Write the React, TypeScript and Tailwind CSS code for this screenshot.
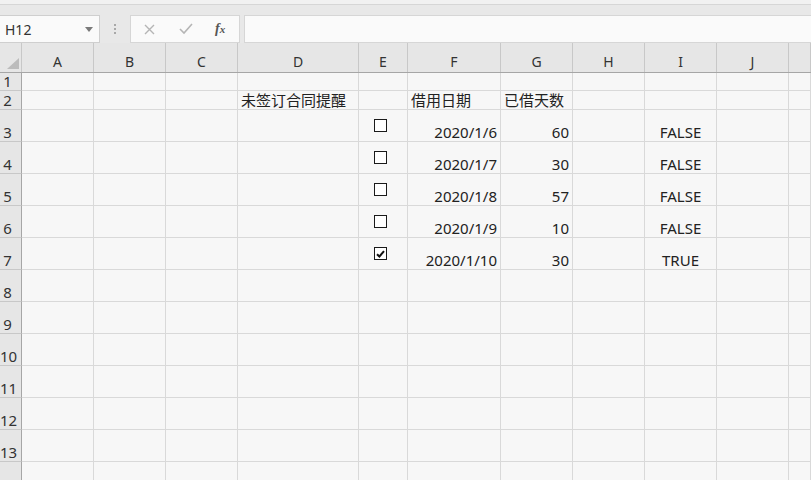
import React from 'react'

const cols = ['A', 'B', 'C', 'D', 'E', 'F', 'G', 'H', 'I', 'J', '']

type Row = { n: number; h: string; d?: string; e?: 'off' | 'on'; f?: string; g?: string; i?: string; header?: boolean; hideNum?: boolean }

const rows: Row[] = [
  { n: 1, h: 'h-[18px]' },
  { n: 2, h: 'h-[19px]', d: '未签订合同提醒', f: '借用日期', g: '已借天数', header: true },
  { n: 3, h: 'h-[32px]', e: 'off', f: '2020/1/6', g: '60', i: 'FALSE' },
  { n: 4, h: 'h-[32px]', e: 'off', f: '2020/1/7', g: '30', i: 'FALSE' },
  { n: 5, h: 'h-[32px]', e: 'off', f: '2020/1/8', g: '57', i: 'FALSE' },
  { n: 6, h: 'h-[32px]', e: 'off', f: '2020/1/9', g: '10', i: 'FALSE' },
  { n: 7, h: 'h-[32px]', e: 'on', f: '2020/1/10', g: '30', i: 'TRUE' },
  { n: 8, h: 'h-[32px]' },
  { n: 9, h: 'h-[32px]' },
  { n: 10, h: 'h-[32px]' },
  { n: 11, h: 'h-[32px]' },
  { n: 12, h: 'h-[32px]' },
  { n: 13, h: 'h-[32px]' },
  // row 14 only shows its top edge, the number sits below the window
  { n: 14, h: 'h-[32px]', hideNum: true },
]

const grid = 'grid grid-cols-[22px_72px_72px_72px_121px_49px_93px_72px_72px_72px_72px_1fr]'

function Checkbox({ checked }: { checked: boolean }) {
  return (
    <div className="w-[13px] h-[13px] border-[1.5px] border-[#1a1a1a] bg-white flex items-center justify-center">
      {checked && (
        <svg width="9" height="8" viewBox="0 0 9 8">
          <path d="M1 4.2 L3.4 6.5 L8 1.2" fill="none" stroke="#111" strokeWidth="2" />
        </svg>
      )}
    </div>
  )
}

function Cell({ children, align = 'left', className = '' }: { children?: React.ReactNode; align?: 'left' | 'right' | 'center'; className?: string }) {
  const justify = align === 'right' ? 'justify-end pr-[3px]' : align === 'center' ? 'justify-center' : 'justify-start pl-[3px]'
  return (
    <div className={`border-r border-b border-[#d9d9d9] flex items-end whitespace-nowrap overflow-visible leading-[15px] pb-px ${justify} ${className}`}>
      {children}
    </div>
  )
}

export default function App() {
  return (
    <div className="w-[811px] h-[480px] overflow-hidden bg-[#f7f7f7] text-[15px] text-[#222] font-['Noto_Sans','Noto_Sans_CJK_SC',sans-serif]">
      {/* Formula bar */}
      <div className="h-[5px] bg-[#f1f1f1] border-b border-[#d6d6d6]" />
      <div className="h-[38px] bg-[#e8e8e8] flex items-start pt-[10px]">
        <div className="w-[100px] h-[28px] bg-[#fafafa] border border-l-0 border-[#cfcfcf] flex items-center justify-between pl-[5px] pr-[6px]">
          <span className="text-[14px] text-[#333] font-['Noto_Sans',sans-serif]">H12</span>
          <svg width="8" height="5" viewBox="0 0 8 5">
            <path d="M0 0 H8 L4 5 Z" fill="#7a7a7a" />
          </svg>
        </div>
        <div className="w-[30px] h-[28px] flex flex-col items-center justify-center gap-[2px]">
          <span className="w-[2px] h-[2px] bg-[#a8a8a8]" />
          <span className="w-[2px] h-[2px] bg-[#a8a8a8]" />
          <span className="w-[2px] h-[2px] bg-[#a8a8a8]" />
        </div>
        <div className="w-[110px] h-[28px] bg-[#fafafa] border border-[#d6d6d6] flex items-center pl-[13px]">
          <svg width="11" height="11" viewBox="0 0 11 11">
            <path d="M1 1 L10 10 M10 1 L1 10" stroke="#b5b5b5" strokeWidth="1.4" />
          </svg>
          <svg width="14" height="12" viewBox="0 0 14 12" className="ml-[24px]">
            <path d="M1 6 L5 10 L13 1" fill="none" stroke="#b5b5b5" strokeWidth="1.6" />
          </svg>
          <span className="ml-[22px] text-[14px] italic font-bold text-[#555] font-['Liberation_Serif',serif] leading-none">
            f<span className="text-[11px]">x</span>
          </span>
        </div>
        <div className="ml-[4px] flex-1 h-[28px] bg-[#fafafa] border border-r-0 border-[#d6d6d6]" />
      </div>

      {/* Column headers */}
      <div className={`${grid} h-[30px] bg-[#e6e6e6] border-b border-[#a6a6a6]`}>
        <div className="border-r border-[#c8c8c8] relative">
          <svg width="12" height="11" viewBox="0 0 12 11" className="absolute left-[7px] top-[15px]">
            <path d="M12 0 V11 H0 Z" fill="#bcbcbc" />
          </svg>
        </div>
        {cols.map((c, i) => (
          <div key={i} className="border-r border-[#c8c8c8] flex items-end justify-center pb-[3px] text-[14px] text-[#333] leading-[15px]">
            {c}
          </div>
        ))}
      </div>

      {/* Rows */}
      {rows.map((r) => (
        <div key={r.n} className={`${grid} ${r.h}`}>
          <div className="bg-[#e6e6e6] border-r border-[#a6a6a6] border-b border-b-[#c8c8c8] flex items-end leading-[15px] pb-px text-[#333]">
            {!r.hideNum && <span className="w-[15px] text-center">{r.n}</span>}
          </div>
          <Cell />
          <Cell />
          <Cell />
          <Cell>{r.d}</Cell>
          <div className="border-r border-b border-[#d9d9d9] flex items-start pl-[15px] pt-[9px]">
            {r.e && <Checkbox checked={r.e === 'on'} />}
          </div>
          <Cell align={r.header ? 'left' : 'right'}>{r.f}</Cell>
          <Cell align={r.header ? 'left' : 'right'}>{r.g}</Cell>
          <Cell />
          <Cell align="center">{r.i}</Cell>
          <Cell />
          <Cell />
        </div>
      ))}
    </div>
  )
}
